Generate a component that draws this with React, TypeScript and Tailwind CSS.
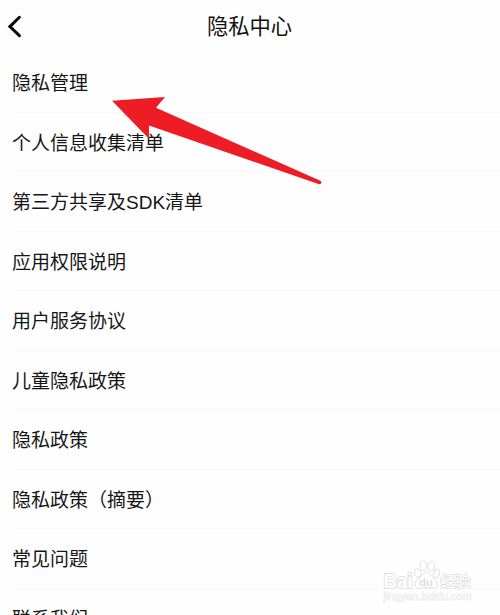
const items = [
  '隐私管理',
  '个人信息收集清单',
  '第三方共享及SDK清单',
  '应用权限说明',
  '用户服务协议',
  '儿童隐私政策',
  '隐私政策',
  '隐私政策（摘要）',
  '常见问题',
  '联系我们',
];

function Header() {
  return (
    <header className="grid h-[53px] grid-cols-[1fr_auto_1fr] items-start">
      <button type="button" aria-label="返回" className="h-[53px] w-10">
        <svg width="40" height="53" viewBox="0 0 40 53" fill="none">
          <path d="M19.4 17.3L9.9 26.6L19.4 35.6" stroke="#080808" strokeWidth="3" strokeLinecap="round" strokeLinejoin="miter" />
        </svg>
      </button>
      <h1 className="-ml-px pt-px text-[21.3px] leading-[53px] text-[#111]">隐私中心</h1>
    </header>
  );
}

function Arrow() {
  return (
    <svg className="pointer-events-none absolute top-[90px] left-[105px]" width="225" height="105" viewBox="105 90 225 105">
      <path
        d="M112 100.7L165 97L156 107.7L320.3 180.8Q322.2 182.3 320.8 183.8Q320 184.4 318.5 184L149 125.5L149 138.8Z"
        fill="#ee1c25"
      />
    </svg>
  );
}

function Watermark() {
  return (
    <svg
      className="pointer-events-none absolute top-[555px] left-[378px] font-['Liberation_Sans','Noto_Sans_CJK_SC',sans-serif]"
      width="100"
      height="52"
      viewBox="378 555 100 52"
      fill="#fff"
      stroke="#e0e0e0"
      strokeWidth="1"
    >
      <text x="383.5" y="587.6" fontSize="19.5" fontWeight="700" textLength="29" lengthAdjust="spacingAndGlyphs" strokeWidth="1.8" paintOrder="stroke">Bai</text>
      <ellipse cx="417.6" cy="573" rx="3.1" ry="4.3" transform="rotate(-20 417.6 573)" />
      <ellipse cx="423.5" cy="565.7" rx="3.3" ry="4.8" />
      <ellipse cx="431.5" cy="566.4" rx="3.2" ry="4.7" transform="rotate(12 431.5 566.4)" />
      <ellipse cx="436.6" cy="573.5" rx="2.9" ry="4.3" transform="rotate(20 436.6 573.5)" />
      <path d="M427 572.8C431 572.8 431.5 577 434.6 579.2C438.7 582.1 438.8 588.3 433 588.3C430.7 588.3 429.3 587.6 426.5 587.6C423.7 587.6 422.1 588.5 419.4 588.5C414 588.5 413.8 582.4 417.6 579.4C421.2 576.5 422.6 572.8 427 572.8Z" />
      <text x="419" y="586.4" fontSize="11.5" fontWeight="700" textLength="14" lengthAdjust="spacingAndGlyphs" fill="#dedede" stroke="none">du</text>
      <text x="440.5" y="587.2" fontSize="15" fontWeight="500" strokeWidth="1.5" paintOrder="stroke">经验</text>
      <text x="383.5" y="600.2" fontSize="11" textLength="88" lengthAdjust="spacingAndGlyphs" fill="#f3f3f3" stroke="#ececec" strokeWidth="0.8" paintOrder="stroke">jingyan.baidu.com</text>
    </svg>
  );
}

export default function App() {
  return (
    <main className="relative h-[615px] w-[500px] overflow-hidden bg-[#fefefe] font-['Liberation_Sans','Noto_Sans_CJK_SC',sans-serif]">
      <Header />
      <ul>
        {items.map((label) => (
          <li key={label} className="h-[59.5px] pl-3">
            <div className="ml-1 flex h-full items-center border-b border-[#f8f8f8] pt-[4px]">
              <span className="-ml-1 text-[19px] whitespace-nowrap text-[#161616]">{label}</span>
            </div>
          </li>
        ))}
      </ul>
      <Arrow />
      <Watermark />
    </main>
  );
}
